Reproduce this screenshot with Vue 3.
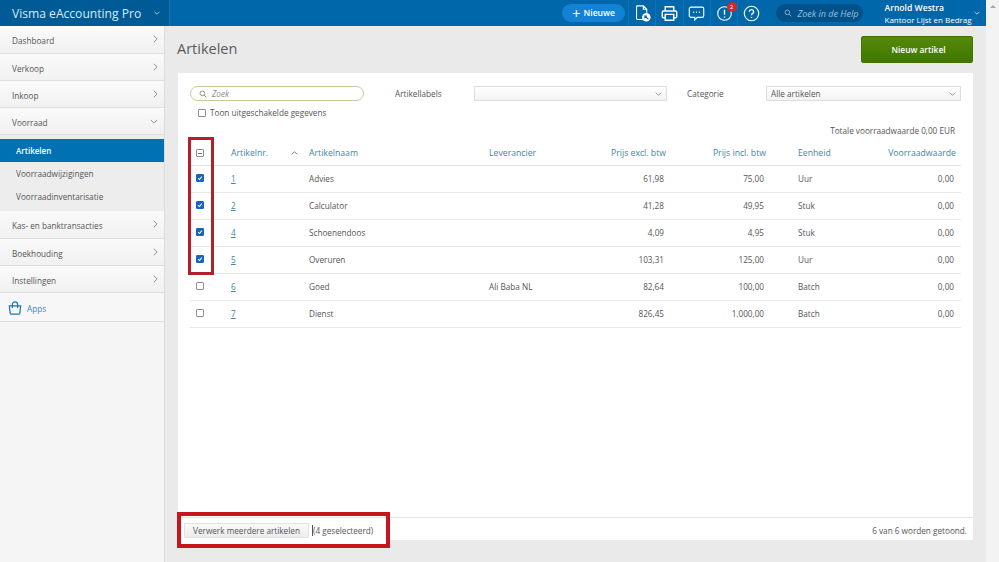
<script setup>
import { ref } from 'vue';

const navTop = ref(['Dashboard', 'Verkoop', 'Inkoop']);
const navBottom = ref(['Kas- en banktransacties', 'Boekhouding', 'Instellingen']);
const subNav = ref(['Voorraadwijzigingen', 'Voorraadinventarisatie']);

const rows = ref([
  { nr: '1', name: 'Advies', sup: '', excl: '61,98', incl: '75,00', unit: 'Uur', checked: true },
  { nr: '2', name: 'Calculator', sup: '', excl: '41,28', incl: '49,95', unit: 'Stuk', checked: true },
  { nr: '4', name: 'Schoenendoos', sup: '', excl: '4,09', incl: '4,95', unit: 'Stuk', checked: true },
  { nr: '5', name: 'Overuren', sup: '', excl: '103,31', incl: '125,00', unit: 'Uur', checked: true },
  { nr: '6', name: 'Goed', sup: 'Ali Baba NL', excl: '82,64', incl: '100,00', unit: 'Batch', checked: false },
  { nr: '7', name: 'Dienst', sup: '', excl: '826,45', incl: '1.000,00', unit: 'Batch', checked: false },
]);
</script>

<template>
  <div class="page">
    <div class="app">
      <header class="topbar">
        <div class="brand">
          <span>Visma eAccounting Pro</span>
          <svg class="chev-small" viewBox="0 0 10 6"><path d="M1 1l4 4 4-4" /></svg>
        </div>
        <div class="top-right">
          <button class="new-btn"><span class="plus">+</span>Nieuwe</button>
          <div class="top-icons">
            <div class="icon-cell">
              <svg viewBox="0 0 20 20" class="ti">
                <path d="M11 17H4a1 1 0 0 1-1-1V2a1 1 0 0 1 1-1h7l4 4v4M11 1v4h4" />
                <circle cx="14.5" cy="14.5" r="5" fill="#fff" stroke="none" />
                <path d="M17 17l-4-4M12.8 15.5V13h2.5" stroke="#00609f" />
              </svg>
            </div>
            <div class="icon-cell">
              <svg viewBox="0 0 20 20" class="ti">
                <path d="M5 7V2h10v5M5 15H3a1.5 1.5 0 0 1-1.5-1.5v-5A1.5 1.5 0 0 1 3 7h14a1.5 1.5 0 0 1 1.5 1.5v5A1.5 1.5 0 0 1 17 15h-2M5 11h10v7H5z" stroke-width="1.7" />
              </svg>
            </div>
            <div class="icon-cell">
              <svg viewBox="0 0 20 20" class="ti">
                <path d="M3.5 2.5h13a2 2 0 0 1 2 2v8a2 2 0 0 1-2 2H11l-3 3v-3H3.5a2 2 0 0 1-2-2v-8a2 2 0 0 1 2-2z" />
                <path d="M6 8.5h1.2M9.4 8.5h1.2M12.8 8.5H14" stroke-width="1.8" />
              </svg>
            </div>
            <div class="icon-cell">
              <div class="alert">
                <svg viewBox="0 0 20 20" class="ti">
                  <circle cx="10" cy="10" r="8" />
                  <path d="M10 5.5v6M10 13.5v1.5" stroke-width="1.6" />
                </svg>
                <span class="badge">2</span>
              </div>
            </div>
            <div class="icon-cell">
              <svg viewBox="0 0 20 20" class="ti">
                <circle cx="10" cy="10" r="8.5" />
                <path d="M7.5 8a2.5 2.5 0 1 1 3.6 2.2c-.8.4-1.1.9-1.1 1.8M10 14v1.2" stroke-width="1.5" />
              </svg>
            </div>
          </div>
          <div class="help-search">
            <svg viewBox="0 0 12 12" class="mag"><circle cx="5" cy="5" r="3.5" /><path d="M7.5 7.5L11 11" /></svg>
            <span>Zoek in de Help</span>
          </div>
          <div class="user">
            <div class="user-name">Arnold Westra</div>
            <div class="user-org">Kantoor Lijst en Bedrag</div>
          </div>
          <svg class="chev-small user-chev" viewBox="0 0 10 6"><path d="M1 1l4 4 4-4" /></svg>
        </div>
      </header>

      <div class="body">
        <aside class="sidebar">
          <a v-for="(item, i) in navTop" :key="item" class="nav-item" :class="{ first: i === 0 }">
            {{ item }}
            <svg class="nav-chev" viewBox="0 0 6 10"><path d="M1 1l4 4-4 4" /></svg>
          </a>
          <a class="nav-item">
            Voorraad
            <svg class="nav-chev down" viewBox="0 0 10 6"><path d="M1 1l4 4 4-4" /></svg>
          </a>
          <div class="subnav">
            <a class="sub-item active">Artikelen</a>
            <a v-for="item in subNav" :key="item" class="sub-item">{{ item }}</a>
          </div>
          <a v-for="(item, i) in navBottom" :key="item" class="nav-item" :class="{ first: i === 0 }">
            {{ item }}
            <svg class="nav-chev" viewBox="0 0 6 10"><path d="M1 1l4 4-4 4" /></svg>
          </a>
          <a class="nav-item apps">
            <svg class="bag" viewBox="0 0 16 16">
              <path d="M1.5 5h13l-1 8.5a1 1 0 0 1-1 1h-9a1 1 0 0 1-1-1zM5 7.5V3.5a3 3 0 0 1 6 0v4" />
            </svg>
            Apps
          </a>
        </aside>

        <main class="main">
          <div class="title-row">
            <h1>Artikelen</h1>
            <button class="primary">Nieuw artikel</button>
          </div>

          <section class="card">
            <div class="card-body">
              <div class="filters">
                <div class="search">
                  <svg viewBox="0 0 12 12" class="mag dark"><circle cx="5" cy="5" r="3.5" /><path d="M7.5 7.5L11 11" /></svg>
                  <span>Zoek</span>
                </div>
                <label class="f-label labels">Artikellabels</label>
                <div class="select s1">
                  <svg class="sel-chev" viewBox="0 0 10 6"><path d="M1 1l4 4 4-4" /></svg>
                </div>
                <label class="f-label cat">Categorie</label>
                <div class="select s2">
                  Alle artikelen
                  <svg class="sel-chev" viewBox="0 0 10 6"><path d="M1 1l4 4 4-4" /></svg>
                </div>
              </div>
              <div class="toggle"><span class="box"></span>Toon uitgeschakelde gegevens</div>
              <div class="total">Totale voorraadwaarde 0,00 EUR</div>

              <div class="table">
                <div class="tr th">
                  <div class="c-check"><span class="box minus"></span></div>
                  <div class="c-nr">Artikelnr.
                    <svg class="sort" viewBox="0 0 10 6"><path d="M1 5l4-4 4 4" /></svg>
                  </div>
                  <div>Artikelnaam</div>
                  <div>Leverancier</div>
                  <div class="num">Prijs excl. btw</div>
                  <div class="num">Prijs incl. btw</div>
                  <div class="c-unit">Eenheid</div>
                  <div class="num last">Voorraadwaarde</div>
                </div>
                <div v-for="row in rows" :key="row.nr" class="tr">
                  <div class="c-check">
                    <span v-if="row.checked" class="box on">
                      <svg viewBox="0 0 8 8"><path d="M1.5 4.2l1.8 1.8 3.2-3.8" /></svg>
                    </span>
                    <span v-else class="box"></span>
                  </div>
                  <div class="c-nr"><a class="nr">{{ row.nr }}</a></div>
                  <div>{{ row.name }}</div>
                  <div>{{ row.sup }}</div>
                  <div class="num val">{{ row.excl }}</div>
                  <div class="num val">{{ row.incl }}</div>
                  <div class="c-unit">{{ row.unit }}</div>
                  <div class="num val last">0,00</div>
                </div>
              </div>
            </div>

            <div class="card-foot">
              <button class="multi">Verwerk meerdere artikelen</button>
              <span class="caret"></span>
              <span>(4 geselecteerd)</span>
              <span class="count">6 van 6 worden getoond.</span>
            </div>
          </section>
        </main>
      </div>
    </div>

    <div class="scrollbar"><span class="up"></span></div>

    <div class="mark mark-col"></div>
    <div class="mark mark-foot"></div>
  </div>
</template>

<style>
html,
body {
  margin: 0;
  overflow: hidden;
}
</style>

<style scoped>
.page {
  position: relative;
  display: flex;
  width: 999px;
  height: 562px;
  overflow: hidden;
  font-family: "Open Sans", "Liberation Sans", sans-serif;
  font-size: 8.2px;
  color: #555;
  background: #eaeaea;
}

.app {
  display: flex;
  flex-direction: column;
  width: 986px;
}

.scrollbar {
  width: 13px;
  background: #f3f3f3;
  display: flex;
  justify-content: center;
  padding-top: 5px;
  box-sizing: border-box;
}

.up {
  width: 0;
  height: 0;
  border-left: 3px solid transparent;
  border-right: 3px solid transparent;
  border-bottom: 3px solid #a8a8a8;
}

/* top bar */
.topbar {
  display: flex;
  height: 26px;
  flex: none;
  background: #0067ab;
  color: #fff;
}

.brand {
  width: 170px;
  box-sizing: border-box;
  display: flex;
  align-items: center;
  padding-left: 12px;
  background: #005a96;
  border-right: 1px solid #1874b0;
  font-size: 12.1px;
  color: #d8eaf5;
}

.chev-small {
  width: 6px;
  height: 4px;
  margin-left: 13px;
  fill: none;
  stroke: #cfe3f0;
  stroke-width: 1.3;
}

.top-right {
  flex: 1;
  display: flex;
  align-items: center;
  padding-left: 392px;
}

.new-btn {
  width: 63px;
  height: 18px;
  padding: 0;
  border: 0;
  border-radius: 9px;
  background: #1381d6;
  color: #fff;
  font: 600 8.6px "Open Sans", sans-serif;
  display: flex;
  align-items: center;
  justify-content: center;
}

.plus {
  font-size: 15px;
  line-height: 15px;
  font-weight: 400;
  margin-right: 3px;
}

.top-icons {
  display: flex;
  align-items: center;
  margin-left: 3px;
}

.icon-cell {
  width: 27.3px;
  height: 26px;
  box-sizing: border-box;
  display: flex;
  align-items: center;
  justify-content: center;
  border-left: 1px solid rgba(255, 255, 255, 0.07);
}

.ti {
  width: 17px;
  height: 17px;
  display: block;
  fill: none;
  stroke: #fff;
  stroke-width: 1.3;
}

.alert {
  position: relative;
}

.badge {
  position: absolute;
  top: -3px;
  right: -4px;
  width: 10px;
  height: 10px;
  border-radius: 50%;
  background: #cf2a2a;
  font-size: 6px;
  line-height: 10px;
  text-align: center;
  color: #fff;
}

.help-search {
  width: 87px;
  height: 18px;
  margin-left: 12px;
  border-radius: 9px;
  background: #00508a;
  display: flex;
  align-items: center;
  padding-left: 8px;
  box-sizing: border-box;
  font-size: 9px;
  font-style: italic;
  color: #9cc0da;
}

.mag {
  width: 8px;
  height: 8px;
  margin-right: 5px;
  fill: none;
  stroke: #9cc0da;
  stroke-width: 1.2;
}

.mag.dark {
  stroke: #777;
}

.user {
  margin-left: 21px;
  width: 90px;
  white-space: nowrap;
}

.user-name {
  font-size: 8.6px;
  font-weight: 600;
  line-height: 12px;
}

.user-org {
  font-size: 8px;
  line-height: 11px;
}

.user-chev {
  margin-left: 0;
}

/* sidebar */
.body {
  flex: 1;
  display: flex;
  min-height: 0;
}

.sidebar {
  width: 165px;
  flex: none;
  background: #f5f5f5;
  border-right: 1px solid #dcdcdc;
  box-sizing: border-box;
}

.nav-item {
  display: flex;
  align-items: center;
  height: 27px;
  box-sizing: border-box;
  padding: 2px 0 0 12px;
  position: relative;
  background: linear-gradient(#fafafa, #f1f1f1);
  border-bottom: 1px solid #dedede;
}

.nav-item.first {
  height: 28px;
}

.nav-chev {
  position: absolute;
  right: 6px;
  top: 9px;
  width: 5px;
  height: 8px;
  fill: none;
  stroke: #777;
  stroke-width: 1;
}

.nav-chev.down {
  width: 8px;
  height: 5px;
  top: 11px;
  right: 6px;
}

.subnav {
  background: #ededed;
  padding: 4px 0 3px;
}

.sub-item {
  display: flex;
  align-items: center;
  height: 23px;
  padding-left: 16px;
}

.sub-item.active {
  background: #0071b3;
  color: #fff;
  font-weight: 600;
  font-size: 8px;
}

.apps {
  height: 29px;
  padding-left: 8px;
  color: #3b86b5;
  background: #f7f7f7;
}

.bag {
  width: 14px;
  height: 15px;
  margin-right: 5px;
  fill: none;
  stroke: #1c78ae;
  stroke-width: 1.4;
}

/* main */
.main {
  flex: 1;
  min-width: 0;
  padding: 10px 13px 22px 13px;
  display: flex;
  flex-direction: column;
}

.title-row {
  display: flex;
  justify-content: space-between;
  align-items: center;
  height: 27px;
  margin-bottom: 10px;
}

h1 {
  margin: -2px 0 0 -1px;
  font-size: 14.5px;
  font-weight: 400;
  color: #5a5a5a;
}

.primary {
  width: 112px;
  height: 27px;
  padding: 0 0 0 3px;
  border: 1px solid #3f7400;
  border-radius: 2px;
  background: linear-gradient(#55890a, #3f7700);
  color: #fff;
  font: 600 8.4px "Open Sans", sans-serif;
}

.card {
  flex: 1;
  display: flex;
  flex-direction: column;
  background: #fff;
}

.card-body {
  flex: 1;
  padding: 13px 12px 0;
}

.filters {
  display: flex;
  align-items: center;
  height: 15px;
}

.search {
  width: 174px;
  height: 15px;
  box-sizing: border-box;
  border: 1px solid #c4c99a;
  border-radius: 8px;
  display: flex;
  align-items: center;
  padding-left: 8px;
  font-style: italic;
  color: #8a8a8a;
}

.labels {
  margin-left: 31px;
  width: 79px;
}

.cat {
  margin-left: 20px;
  width: 79px;
}

.select {
  height: 15px;
  box-sizing: border-box;
  position: relative;
  border: 1px solid #ddd;
  background: linear-gradient(#fff, #f3f3f3);
  padding-left: 4px;
  line-height: 13px;
}

.s1 {
  width: 193px;
}

.s2 {
  width: 195px;
}

.sel-chev {
  position: absolute;
  right: 4px;
  top: 5px;
  width: 7px;
  height: 4px;
  fill: none;
  stroke: #777;
  stroke-width: 1.1;
}

.toggle {
  display: flex;
  align-items: center;
  height: 13px;
  margin-top: 5px;
  padding-left: 8px;
}

.toggle .box {
  margin-right: 4px;
}

.box {
  width: 6px;
  height: 6px;
  border: 1px solid #8f8f8f;
  border-radius: 1px;
  display: inline-block;
  background: #fff;
  position: relative;
  flex: none;
}

.box.minus::after {
  content: "";
  position: absolute;
  left: 1px;
  right: 1px;
  top: 2.5px;
  height: 1px;
  background: #666;
}

.box.on {
  background: #1565c0;
  border-color: #1565c0;
}

.box.on svg {
  display: block;
  width: 6px;
  height: 6px;
  fill: none;
  stroke: #fff;
  stroke-width: 1.4;
}

.total {
  text-align: right;
  padding-right: 6px;
  margin-top: 5px;
  line-height: 13px;
}

.tr {
  display: grid;
  grid-template-columns: 41px 78px 180px 77px 100px 100px 92px 103px;
  align-items: center;
  height: 27px;
  padding-bottom: 2px;
  box-sizing: border-box;
  border-bottom: 1px solid #e8e8e8;
}

.th {
  height: 29px;
  padding: 4px 0 0;
  font-size: 8.7px;
  color: #4584a4;
  border-bottom: 1px solid #e2e2e2;
}

.c-check {
  display: flex;
  justify-content: center;
  width: 20px;
}

.c-nr {
  position: relative;
}

.sort {
  position: absolute;
  left: 60px;
  top: 4px;
  width: 7px;
  height: 4px;
  fill: none;
  stroke: #555;
  stroke-width: 1.1;
}

.nr {
  color: #4584a4;
  text-decoration: underline;
}

.num {
  text-align: right;
}

.val {
  padding-right: 2px;
}

.c-unit {
  padding-left: 32px;
}

.last {
  padding-right: 5px;
}

.val.last {
  padding-right: 7px;
}

.card-foot {
  display: flex;
  align-items: center;
  height: 23px;
  box-sizing: border-box;
  border-top: 1px solid #e4e4e4;
  padding: 5px 6px 2px;
}

.multi {
  width: 125px;
  height: 15px;
  padding: 0;
  border: 1px solid #e2e2e2;
  border-radius: 1px;
  background: linear-gradient(#fafafa, #ececec);
  font: 400 8.2px "Open Sans", sans-serif;
  color: #555;
}

.caret {
  width: 1px;
  height: 11px;
  margin: 0 0 0 3px;
  background: #555;
}

.count {
  margin-left: auto;
}

/* red annotations drawn over the screenshot */
.mark {
  position: absolute;
  box-sizing: border-box;
  pointer-events: none;
}

.mark-col {
  left: 188px;
  top: 137px;
  width: 26px;
  height: 138px;
  border: 3px solid #b3202c;
}

.mark-foot {
  left: 177px;
  top: 512px;
  width: 213px;
  height: 36px;
  border: 4px solid #c8141f;
}

.mark-foot::after {
  content: "";
  position: absolute;
  left: 0;
  right: 0;
  bottom: 0;
  height: 4px;
  background: #fff;
}
</style>
